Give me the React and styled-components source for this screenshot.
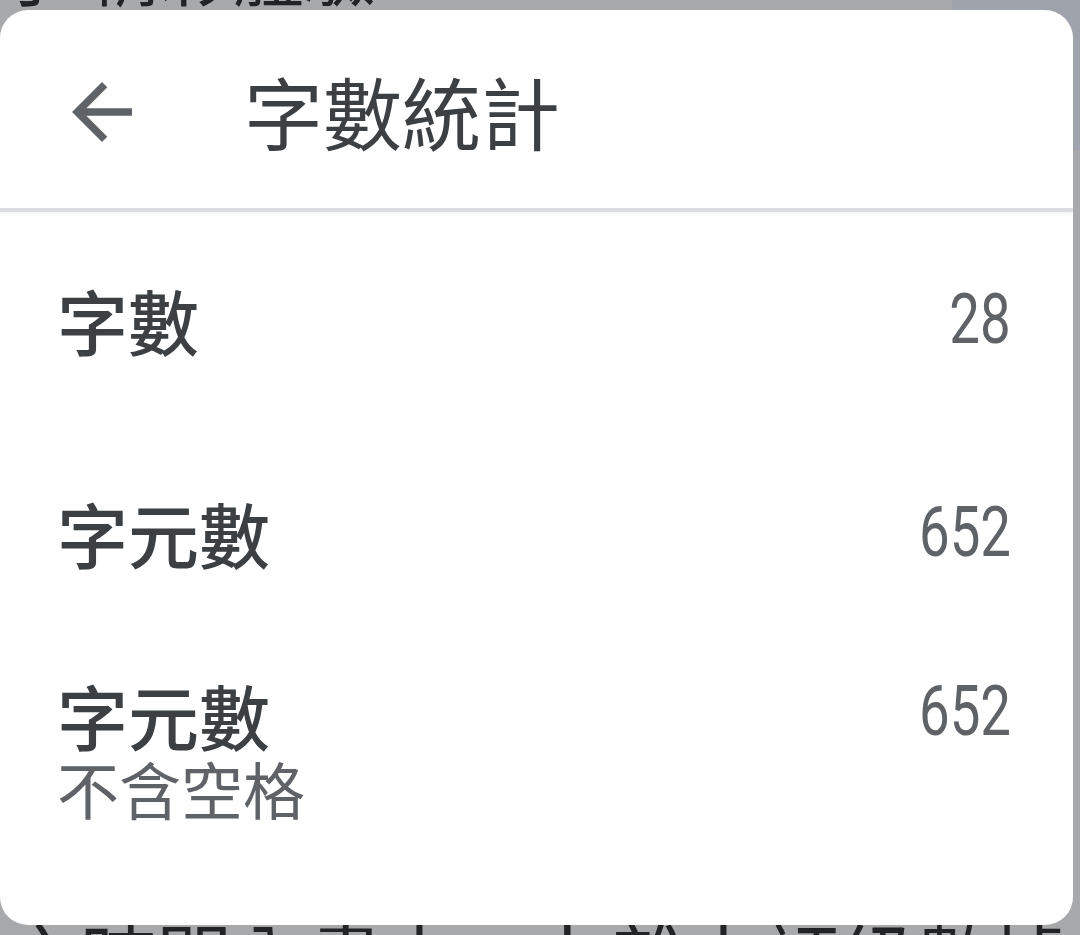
import styled, { createGlobalStyle } from "styled-components"

const GlobalStyle = createGlobalStyle`
    html, body {
        margin: 0;
        padding: 0;
    }
    body {
        font-family: "Noto Sans CJK TC", "Noto Sans", sans-serif;
    }
`

const stats = [
    { label: "字數", value: "28" },
    { label: "字元數", value: "652" },
    { label: "字元數", note: "不含空格", value: "652" },
]

function BackIcon() {
    return (
        <svg width="90" height="90" viewBox="0 0 24 24" fill="#5f6368">
            <path d="M20 11H7.83l5.59-5.59L12 4l-8 8 8 8 1.41-1.41L7.83 13H20v-2z" />
        </svg>
    )
}

export default function App() {
    return (
        <>
            <GlobalStyle />
            <Page>
                <PeekTop>
                    <Behind>小 精彩體驗</Behind>
                </PeekTop>

                <Dialog>
                    <Header>
                        <IconButton aria-label="返回">
                            <BackIcon />
                        </IconButton>
                        <Title>字數統計</Title>
                    </Header>

                    {stats.map((s, i) => (
                        <Row key={i} $multi={!!s.note}>
                            <Label>
                                <Name>{s.label}</Name>
                                {s.note && <Note>{s.note}</Note>}
                            </Label>
                            <Value $multi={!!s.note}>{s.value}</Value>
                        </Row>
                    ))}
                </Dialog>

                <PeekBottom>
                    <Behind $below>之時間內畫上、卜雜上評級數據</Behind>
                </PeekBottom>
            </Page>
        </>
    )
}

const Page = styled.div`

    width: 1080px;
    height: 935px;
    overflow: hidden;
    display: flex;
    flex-direction: column;
    background:
        linear-gradient(#9fa3ab, #9fa3ab) no-repeat right top / 128px 150px,
        #a8a9aa;

`

const PeekTop = styled.div`

    height: 10px;
    overflow: hidden;
    display: flex;
    align-items: flex-end;

`

const PeekBottom = styled.div`

    height: 10px;
    overflow: hidden;
    display: flex;
    align-items: flex-start;

`

const Behind = styled.span`

    font-size: ${({ $below }) => ($below ? "76px" : "72px")};
    line-height: 1;
    color: #222324;
    white-space: nowrap;
    margin-bottom: ${({ $below }) => ($below ? "0" : "5px")};
    margin-top: ${({ $below }) => ($below ? "-8px" : "0")};
    padding-left: ${({ $below }) => ($below ? "4px" : "0")};

`

const Dialog = styled.div`

    width: 1073px;
    height: 915px;
    flex-shrink: 0;
    box-sizing: border-box;
    background-color: #ffffff;
    border-radius: 28px;
    overflow: hidden;
    display: flex;
    flex-direction: column;

`

const Header = styled.div`

    height: 202px;
    flex-shrink: 0;
    box-sizing: border-box;
    padding-left: 57px;
    display: flex;
    align-items: center;
    gap: 97px;
    border-bottom: 4px solid #dcdde1;
    box-shadow: 0 2px 3px rgba(0, 0, 0, 0.05);

`

const IconButton = styled.div`

    width: 90px;
    height: 90px;
    display: flex;
    align-items: center;
    justify-content: center;
    margin-top: 6px;

`

const Title = styled.h1`

    margin: 2px 0 0;
    font-size: 79px;
    font-weight: 400;
    line-height: 1;
    color: #3c4043;

`

const Row = styled.div`

    height: 213px;
    flex-shrink: 0;
    box-sizing: border-box;
    padding: ${({ $multi }) => ($multi ? "34px 62px 0 57px" : "0 62px 0 57px")};
    display: flex;
    justify-content: space-between;
    align-items: ${({ $multi }) => ($multi ? "flex-start" : "center")};

`

const Label = styled.div`

    display: flex;
    flex-direction: column;

`

const Name = styled.span`

    font-size: 71px;
    font-weight: 500;
    line-height: 84px;
    color: #3c4043;

`

const Note = styled.span`

    font-size: 62px;
    font-weight: 400;
    line-height: 64px;
    color: #5f6368;

`

const Value = styled.span`

    display: inline-block;
    font-family: Roboto, "Liberation Sans", sans-serif;
    font-size: 70px;
    font-weight: 400;
    line-height: 84px;
    color: #5f6368;
    transform: scaleX(0.78);
    transform-origin: right center;
    margin-top: ${({ $multi }) => ($multi ? "-3px" : "0")};

`
